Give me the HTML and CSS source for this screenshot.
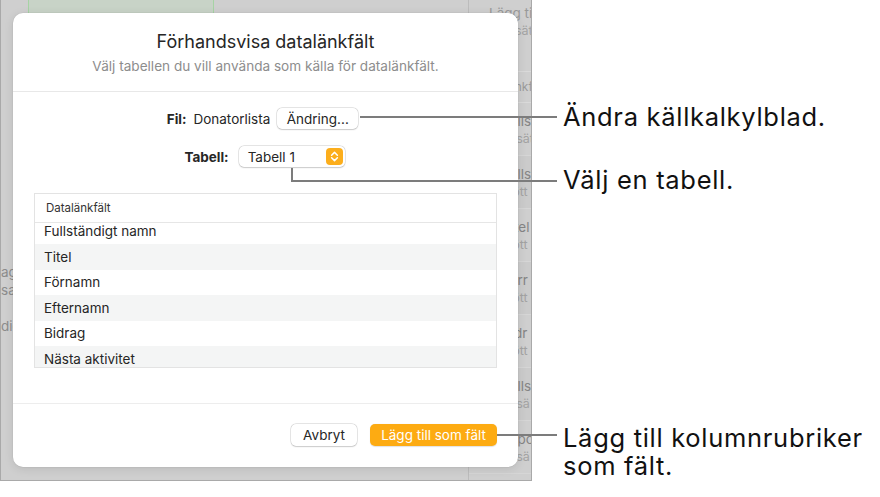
FILE: index.html
```html
<!DOCTYPE html>
<html lang="sv">
<head>
<meta charset="utf-8">
<title>Förhandsvisa datalänkfält</title>
<link rel="stylesheet" href="styles.css">
</head>
<body>
<div class="stage">
  <div class="bgwin">
    <div class="bg-main">
      <div class="bg-top"><div class="bg-green"></div></div>
      <div class="bg-left-text">
        <div>agg till</div>
        <div>sa</div>
        <div>&nbsp;</div>
        <div>dig</div>
      </div>
    </div>
    <div class="bg-side">
      <div class="side-head">
        <div class="side-title">Lägg till</div>
        <div class="side-sub">sätt till</div>
      </div>
      <div class="side-cap">Datalänkfält</div>
      <div class="side-item"><div class="side-title">Fullst</div><div class="side-sub">Ersätt</div></div>
      <div class="side-item alt"><div class="side-title">Fullst</div><div class="side-sub">Bött</div></div>
      <div class="side-item"><div class="side-title">Titel</div><div class="side-sub">Bött</div></div>
      <div class="side-item alt"><div class="side-title">Förr</div><div class="side-sub">Bött</div></div>
      <div class="side-item"><div class="side-title">Bidr</div><div class="side-sub">Bött</div></div>
      <div class="side-item alt"><div class="side-title">Fullst</div><div class="side-sub">Ersä</div></div>
      <div class="side-item"><div class="side-title">Expo</div><div class="side-sub">Ersä</div></div>
    </div>
  </div>

  <div class="dialog">
    <div class="dlg-head">
      <div class="title">Förhandsvisa datalänkfält</div>
      <div class="subtitle">Välj tabellen du vill använda som källa för datalänkfält.</div>
    </div>
    <div class="dlg-body">
      <div class="form-row row-fil">
        <span class="label">Fil:</span>
        <span class="value">Donatorlista</span>
        <span class="btn btn-change">Ändring...</span>
      </div>
      <div class="form-row row-tab">
        <span class="label">Tabell:</span>
        <span class="popup">
          <span class="popup-text">Tabell 1</span>
          <svg class="stepper" width="17" height="17" viewBox="0 0 17 17">
            <rect x="0" y="0" width="17" height="17" rx="4" fill="#fcae1c"/>
            <path d="M5.6 7.2 L8.5 4.4 L11.4 7.2" fill="none" stroke="#fff" stroke-width="1.5" stroke-linecap="round" stroke-linejoin="round"/>
            <path d="M5.6 9.8 L8.5 12.6 L11.4 9.8" fill="none" stroke="#fff" stroke-width="1.5" stroke-linecap="round" stroke-linejoin="round"/>
          </svg>
        </span>
      </div>
      <div class="table">
        <div class="table-head">Datalänkfält</div>
        <div class="table-list">
          <div class="rows">
            <div class="row">Fullständigt namn</div>
            <div class="row alt">Titel</div>
            <div class="row">Förnamn</div>
            <div class="row alt">Efternamn</div>
            <div class="row">Bidrag</div>
            <div class="row alt">Nästa aktivitet</div>
            <div class="row">Adress</div>
          </div>
        </div>
      </div>
    </div>
    <div class="dlg-foot">
      <span class="btn btn-cancel">Avbryt</span>
      <span class="btn btn-primary">Lägg till som fält</span>
    </div>
  </div>

  <div class="callouts">
    <div class="line l1"></div>
    <div class="line l2v"></div>
    <div class="line l2h"></div>
    <div class="line l3"></div>
    <div class="note n1">Ändra källkalkylblad.</div>
    <div class="note n2">Välj en tabell.</div>
    <div class="note n3">Lägg till kolumnrubriker<br>som fält.</div>
  </div>
</div>
</body>
</html>
```

FILE: styles.css
```css
* { box-sizing: border-box; }
html, body { margin: 0; padding: 0; background: #fff; }
body { font-family: "Inter", "Noto Sans", sans-serif; color: #222; }

.stage { position: relative; width: 880px; height: 497px; overflow: hidden; }

/* background window */
.bgwin {
  width: 532px;
  height: 481px;
  display: flex;
  background: #cfcfcf;
  border-left: 1px solid #a9a9a9;
  border-right: 1px solid #a9a9a9;
  border-bottom: 1px solid #a9a9a9;
  overflow: hidden;
}
.bg-main { width: 467px; flex: none; display: flex; flex-direction: column; }
.bg-top { height: 14px; }
.bg-green {
  margin-left: 27px;
  width: 186px;
  height: 14px;
  background: #c8d3c7;
  border-left: 1px solid #a6d3a4;
  border-right: 1px solid #a6d3a4;
}
.bg-left-text {
  margin-top: 249px;
  font-size: 13.5px;
  line-height: 18px;
  color: #8c8c8c;
  white-space: nowrap;
}
.bg-side {
  flex: 1;
  min-width: 0;
  border-left: 1px solid #bcbcbc;
  overflow: hidden;
  font-size: 13.5px;
  color: #8f8f8f;
  white-space: nowrap;
}
.side-head { height: 72px; padding: 4px 0 0 20px; border-bottom: 1px solid #dadada; }
.side-head .side-title { line-height: 18px; color: #999; }
.side-head .side-sub { line-height: 18px; padding-left: 26px; }
.side-cap { height: 31px; padding: 7px 0 0 10px; border-bottom: 1px solid #dadada; color: #9a9a9a; font-size: 12px; }
.side-item { height: 53px; padding: 9px 0 0 33px; border-bottom: 1px solid #d6d6d6; }
.side-item.alt { background: #cbcbcb; }
.side-title { line-height: 18px; color: #858585; }
.side-sub { line-height: 18px; color: #a3a3a3; font-size: 12.5px; padding-left: 2px; }

/* dialog */
.dialog {
  position: absolute;
  left: 13px;
  top: 13px;
  width: 505px;
  height: 454px;
  background: #fff;
  border-radius: 10px;
  box-shadow: 0 0 0 0.5px rgba(0,0,0,0.06), 0 2px 10px rgba(0,0,0,0.10);
  display: flex;
  flex-direction: column;
}
.dlg-head {
  padding: 18px 20px 16px;
  text-align: center;
  border-bottom: 1px solid #e8e8e8;
}
.title { font-size: 18px; line-height: 22px; color: #262626; }
.subtitle { font-size: 13.6px; line-height: 18px; color: #8d8d8d; margin-top: 4px; }

.dlg-body { flex: 1; padding: 16px 21px 0; display: flex; flex-direction: column; }
.form-row {
  display: flex;
  align-items: center;
  justify-content: center;
  height: 21px;
  font-size: 13.5px;
  color: #262626;
}
.row-fil { padding-right: 6px; }
.row-fil .value { margin-left: 7px; margin-right: 7px; }
.row-tab { margin-top: 17px; padding-right: 2px; }
.row-tab .label { margin-right: 10px; }
.label { font-weight: 700; color: #262626; }

.btn {
  display: inline-flex;
  align-items: center;
  justify-content: center;
  background: #fff;
  border-radius: 5px;
  box-shadow: 0 0 0 0.5px rgba(0,0,0,0.16), 0 0.5px 1.5px rgba(0,0,0,0.14);
  font-size: 13.5px;
  color: #262626;
  white-space: nowrap;
}
.btn-change { width: 81px; height: 21px; }

.popup {
  width: 106px;
  height: 21px;
  display: inline-flex;
  align-items: center;
  justify-content: space-between;
  padding: 0 2px 0 9px;
  background: #fff;
  border-radius: 5px;
  box-shadow: 0 0 0 0.5px rgba(0,0,0,0.16), 0 0.5px 1.5px rgba(0,0,0,0.14);
}
.popup-text { font-size: 13.5px; color: #262626; }
.stepper { display: block; }

.table {
  margin-top: 26px;
  height: 175px;
  border: 1px solid #e3e3e3;
  display: flex;
  flex-direction: column;
}
.table-head {
  height: 29px;
  flex: none;
  padding-left: 11px;
  display: flex;
  align-items: center;
  font-size: 11.5px;
  color: #333;
  border-bottom: 1px solid #e6e6e6;
}
.table-list { flex: 1; overflow: hidden; }
.rows { margin-top: -4.5px; }
.row {
  height: 25.5px;
  padding-left: 9px;
  display: flex;
  align-items: center;
  font-size: 13.5px;
  color: #262626;
}
.row.alt { background: #f4f5f5; }

.dlg-foot {
  flex: none;
  height: 64px;
  border-top: 1px solid #ededed;
  display: flex;
  justify-content: flex-end;
  align-items: flex-start;
  gap: 13px;
  padding: 20px 21px 0;
}
.btn-cancel { width: 66px; height: 22px; }
.btn-primary {
  width: 127px;
  height: 22px;
  background: #fdab12;
  color: #fff;
  box-shadow: 0 0.5px 1px rgba(0,0,0,0.12);
}

/* callouts */
.callouts { position: absolute; left: 0; top: 0; width: 880px; height: 497px; pointer-events: none; }
.line { position: absolute; background: #7c7c7c; }
.l1 { left: 360px; top: 116px; width: 197px; height: 2px; }
.l2v { left: 291px; top: 168px; width: 2px; height: 14px; }
.l2h { left: 291px; top: 180px; width: 266px; height: 2px; }
.l3 { left: 497px; top: 434px; width: 60px; height: 2px; }
.note {
  position: absolute;
  left: 563px;
  font-size: 25.5px;
  line-height: 28px;
  letter-spacing: 0.7px;
  color: #111;
  white-space: nowrap;
}
.n1 { top: 103px; }
.n2 { top: 166px; }
.n3 { top: 424px; }
```
